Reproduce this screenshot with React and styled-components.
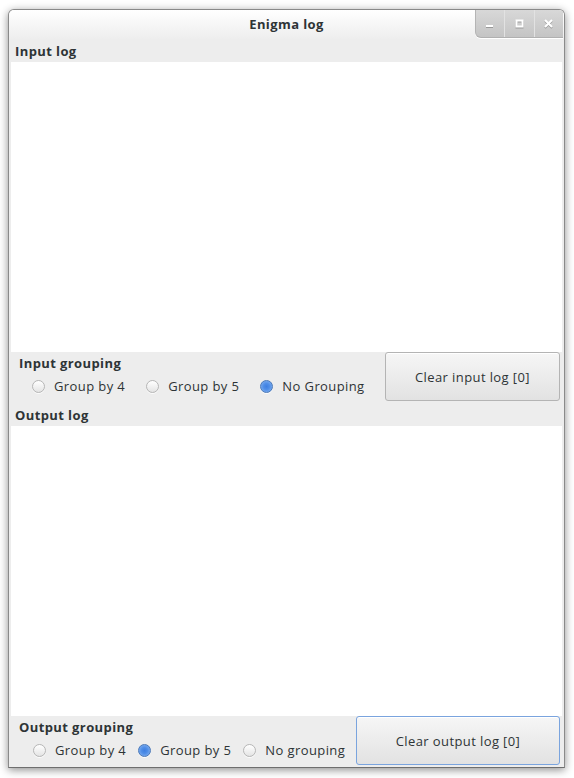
import React from "react";
import styled, { createGlobalStyle } from "styled-components";

const GlobalStyle = createGlobalStyle`
  html, body {
    margin: 0;
    padding: 0;
    background: #ffffff;
  }
  body {
    font-family: "Open Sans", "Noto Sans", sans-serif;
    font-size: 13px;
    letter-spacing: 0.4px;
    color: #2e3436;
  }
`;

const Page = styled.div`
  padding: 9px 9px 0 8px;
  height: 778px;
  box-sizing: border-box;
`;

const Window = styled.div`
  width: 557px;
  height: 759px;
  box-sizing: border-box;
  display: flex;
  flex-direction: column;
  background: #ededed;
  border: 1px solid #8a8a8a;
  border-bottom-color: #6e6e6e;
  border-radius: 6px 6px 0 0;
  box-shadow: 0 2px 9px rgba(0, 0, 0, 0.45);
  overflow: hidden;
`;

const TitleBar = styled.div`
  height: 30px;
  flex: none;
  display: grid;
  grid-template-columns: 1fr auto 1fr;
  align-items: start;
  background: linear-gradient(#ffffff, #ededed);
`;

const Title = styled.div`
  grid-column: 2;
  font-weight: bold;
  font-size: 13px;
  line-height: 28px;
  color: #2e3436;
`;

const Controls = styled.div`
  grid-column: 3;
  justify-self: end;
  display: flex;
  height: 27px;
  margin-right: 1px;
  border-bottom-left-radius: 6px;
  border-left: 1px solid #b4b4b4;
  border-bottom: 1px solid #b0b0b0;
  background: linear-gradient(#d8d8d8, #c4c4c4);
  box-shadow: 0 1px 0 #ffffff;
  overflow: hidden;
`;

const ControlButton = styled.div`
  width: 28.5px;
  display: flex;
  align-items: center;
  justify-content: center;
  & + & {
    border-left: 1px solid #e2e2e2;
  }
  svg {
    filter: drop-shadow(0 1px 0 rgba(0, 0, 0, 0.25));
  }
`;

const SectionLabel = styled.div`
  height: 22px;
  flex: none;
  padding-left: 6px;
  font-weight: bold;
  line-height: 22px;
  color: #2e3436;
`;

const LogArea = styled.div`
  height: 290px;
  flex: none;
  margin: 0 2px;
  background: #ffffff;
`;

const GroupingBar = styled.div`
  height: 52px;
  flex: none;
  display: flex;
  align-items: flex-start;
  justify-content: space-between;
  padding: 0 4px 0 10px;
  box-sizing: border-box;
`;

const GroupBox = styled.div`
  display: flex;
  flex-direction: column;
  padding-top: 1px;
`;

const GroupTitle = styled.div`
  font-weight: bold;
  line-height: 20px;
`;

const RadioRow = styled.div`
  display: flex;
  align-items: center;
  gap: ${(p) => p.$gap}px;
  padding-left: ${(p) => p.$indent}px;
  margin-top: 1px;
  height: 24px;
`;

const RadioOption = styled.label`
  display: flex;
  align-items: center;
  gap: 9px;
  color: #2e3436;
`;

const RadioDot = styled.span`
  width: 13px;
  height: 13px;
  box-sizing: border-box;
  border-radius: 50%;
  border: 1px solid ${(p) => (p.$checked ? "#4a78b8" : "#b6b6b6")};
  background: ${(p) =>
    p.$checked
      ? "radial-gradient(circle at 50% 50%, #3f7fe0 0, #4f8ee8 3px, #79aaee 6px)"
      : "linear-gradient(#ffffff, #e4e4e4)"};
  box-shadow: 0 1px 0 rgba(255, 255, 255, 0.8);
`;

const ClearButton = styled.button`
  width: ${(p) => p.$width}px;
  height: 49px;
  font-family: inherit;
  font-size: 13px;
  letter-spacing: inherit;
  color: #2e3436;
  border-radius: 3px;
  border: 1px solid ${(p) => (p.$focused ? "#7aa4de" : "#b4b4b4")};
  background: linear-gradient(#f6f6f6, #e2e2e2);
  box-shadow: inset 0 1px 0 #ffffff;
  padding: 0;
`;

function Radio({ label, checked }) {
  return (
    <RadioOption>
      <RadioDot $checked={checked} />
      {label}
    </RadioOption>
  );
}

function Grouping({ title, options, selected, gap, indent, buttonLabel, buttonWidth, focused }) {
  return (
    <GroupingBar>
      <GroupBox>
        <GroupTitle>{title}</GroupTitle>
        <RadioRow $gap={gap} $indent={indent}>
          {options.map((o) => (
            <Radio key={o} label={o} checked={o === selected} />
          ))}
        </RadioRow>
      </GroupBox>
      <ClearButton $width={buttonWidth} $focused={focused}>
        {buttonLabel}
      </ClearButton>
    </GroupingBar>
  );
}

export default function App() {
  return (
    <Page>
      <GlobalStyle />
      <Window>
        <TitleBar>
          <Title>Enigma log</Title>
          <Controls>
            <ControlButton>
              <svg width="9" height="9" viewBox="0 0 9 9">
                <rect x="1" y="6" width="7" height="2" fill="#fff" />
              </svg>
            </ControlButton>
            <ControlButton>
              <svg width="9" height="9" viewBox="0 0 9 9">
                <rect x="1.5" y="1.5" width="6" height="6" fill="none" stroke="#fff" strokeWidth="2" />
              </svg>
            </ControlButton>
            <ControlButton>
              <svg width="9" height="9" viewBox="0 0 9 9">
                <path d="M1 1 L8 8 M8 1 L1 8" stroke="#fff" strokeWidth="2" />
              </svg>
            </ControlButton>
          </Controls>
        </TitleBar>
        <SectionLabel>Input log</SectionLabel>
        <LogArea />
        <Grouping
          title="Input grouping"
          options={["Group by 4", "Group by 5", "No Grouping"]}
          selected="No Grouping"
          gap={21}
          indent={13}
          buttonLabel="Clear input log [0]"
          buttonWidth={175}
        />
        <SectionLabel>Output log</SectionLabel>
        <LogArea />
        <Grouping
          title="Output grouping"
          options={["Group by 4", "Group by 5", "No grouping"]}
          selected="Group by 5"
          gap={12}
          indent={14}
          buttonLabel="Clear output log [0]"
          buttonWidth={204}
          focused
        />
      </Window>
    </Page>
  );
}
